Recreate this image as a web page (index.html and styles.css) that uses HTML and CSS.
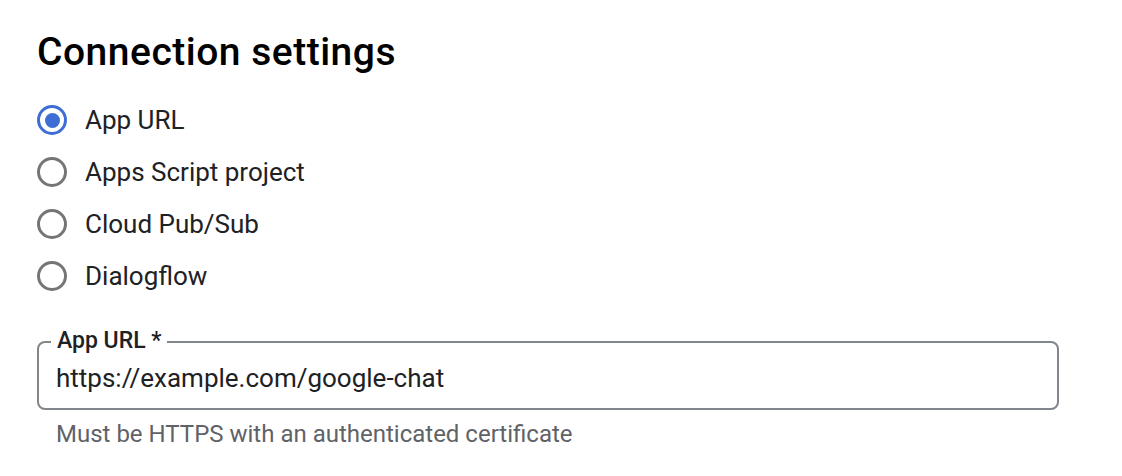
FILE: index.html
```html
<!DOCTYPE html>
<html lang="en">
<head>
<meta charset="utf-8">
<title>Connection settings</title>
<link rel="stylesheet" href="styles.css">
</head>
<body>
<main class="page">
  <h1 class="title">Connection settings</h1>
  <div class="radios">
    <label class="radio checked"><span class="ring"><span class="dot"></span></span><span class="rlabel">App URL</span></label>
    <label class="radio"><span class="ring"></span><span class="rlabel">Apps Script project</span></label>
    <label class="radio"><span class="ring"></span><span class="rlabel">Cloud Pub/Sub</span></label>
    <label class="radio"><span class="ring"></span><span class="rlabel">Dialogflow</span></label>
  </div>
  <div class="field">
    <div class="outline">
      <span class="legend">App URL *</span>
      <div class="value">https://example.com/google-chat</div>
    </div>
    <div class="hint">Must be HTTPS with an authenticated certificate</div>
  </div>
</main>
</body>
</html>
```
FILE: styles.css
```css
html, body {
  margin: 0;
  padding: 0;
  background: #ffffff;
}
body {
  font-family: Roboto, "Liberation Sans", Arial, sans-serif;
  color: #202124;
}
.page {
  padding: 29px 63px 0 37px;
}
.title {
  margin: 0;
  font-size: 39px;
  font-weight: 500;
  line-height: 46px;
  letter-spacing: 0.5px;
  color: #000000;
}
.radios {
  display: flex;
  flex-direction: column;
  gap: 22px;
  margin-top: 30px;
}
.radio {
  display: flex;
  align-items: center;
  gap: 18px;
  height: 30px;
}
.ring {
  box-sizing: border-box;
  width: 30px;
  height: 30px;
  border: 3px solid #757575;
  border-radius: 50%;
  display: flex;
  align-items: center;
  justify-content: center;
  flex: none;
}
.radio.checked .ring {
  border-color: #3d6ed6;
}
.dot {
  width: 15px;
  height: 15px;
  border-radius: 50%;
  background: #3d6ed6;
}
.rlabel {
  font-size: 26px;
  line-height: 30px;
  color: #202124;
}
.field {
  margin-top: 50px;
}
.outline {
  position: relative;
  box-sizing: border-box;
  height: 69px;
  padding: 20px 17px 0 17px;
  border: 2px solid #80868b;
  border-radius: 8px;
}
.legend {
  position: absolute;
  top: -14.5px;
  left: 12px;
  padding: 0 6px;
  background: #ffffff;
  font-size: 23px;
  font-weight: 500;
  line-height: 24px;
  color: #202124;
}
.value {
  font-size: 26px;
  line-height: 30px;
  color: #202124;
}
.hint {
  margin-top: 10px;
  padding-left: 19px;
  font-size: 24px;
  line-height: 28px;
  color: #5f6368;
}
```
